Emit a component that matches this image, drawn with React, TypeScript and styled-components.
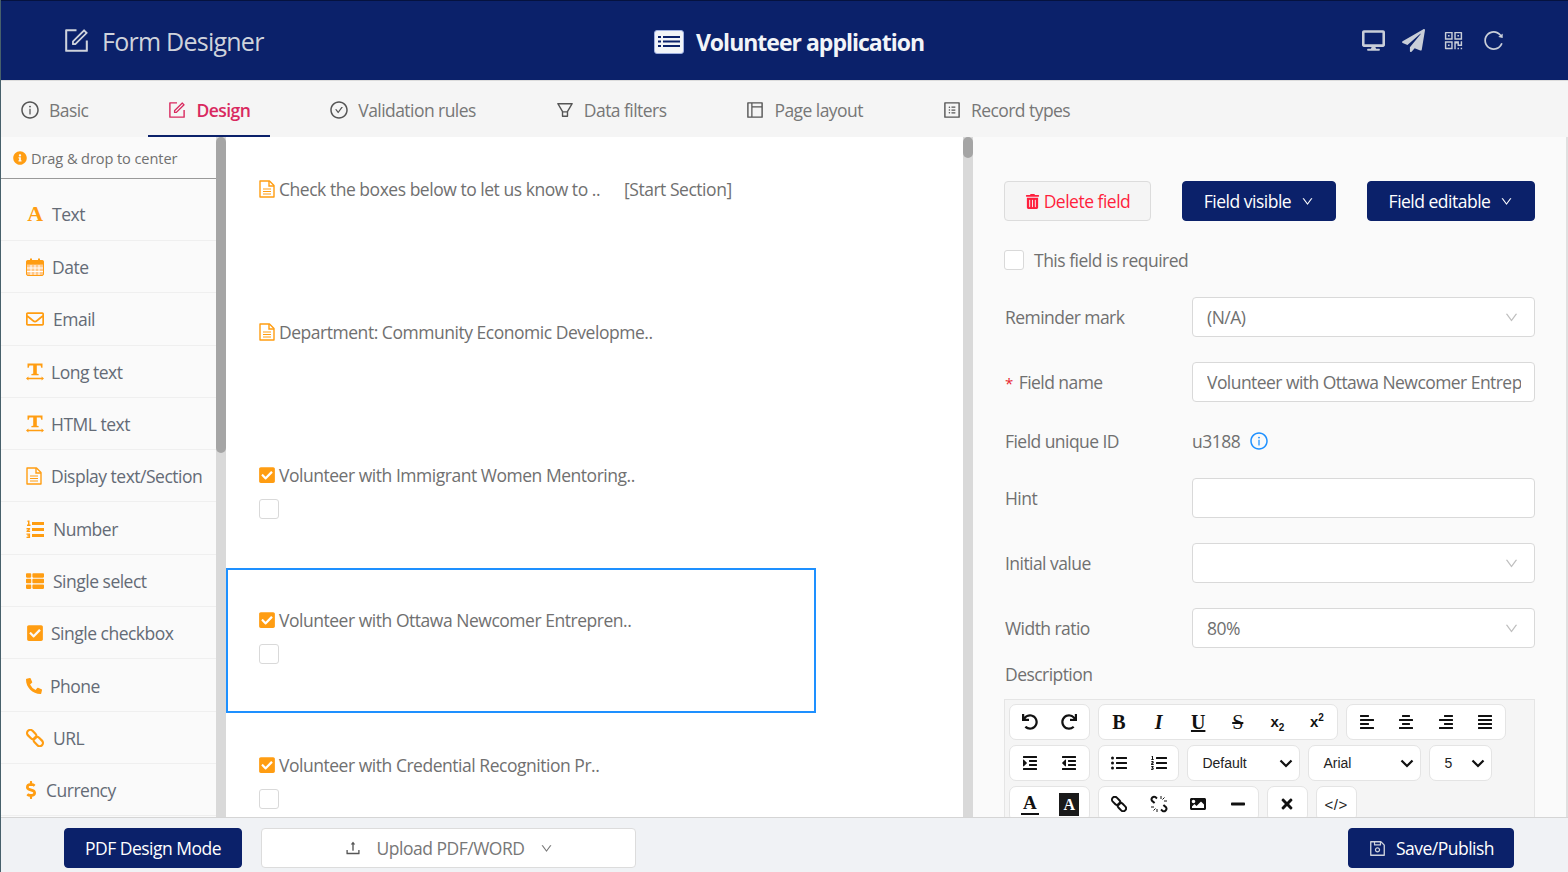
import React from "react";
import styled, { createGlobalStyle } from "styled-components";
import {
  AiOutlineCheckCircle, AiOutlineDown, AiOutlineFilter, AiOutlineForm, AiOutlineInfoCircle, AiOutlineLayout,
  AiOutlineProfile, AiOutlineQrcode, AiOutlineReload, AiOutlineSave, AiOutlineUpload,
} from "react-icons/ai";
import {
  FaAlignCenter, FaAlignJustify, FaAlignLeft, FaAlignRight, FaCheckSquare, FaDesktop, FaDollarSign,
  FaImage, FaIndent, FaInfoCircle, FaListOl, FaListUl, FaMinus, FaOutdent, FaPaperPlane,
  FaPhoneAlt, FaRedo, FaRegEnvelope, FaThList, FaTimes, FaTrashAlt, FaUndo,
} from "react-icons/fa";

const navy = "#0b216a";
const orange = "#ff9d12";
const font = `"Open Sans", "Noto Sans", sans-serif`;
const chevron = `url("data:image/svg+xml,%3Csvg xmlns='http://www.w3.org/2000/svg' width='14' height='9' viewBox='0 0 14 9'%3E%3Cpath d='M1.5 1.5L7 7l5.5-5.5' fill='none' stroke='%23111' stroke-width='2.2'/%3E%3C/svg%3E")`;

const Global = createGlobalStyle`
  html, body { margin: 0; padding: 0; height: 100%; overflow: hidden; background: #fff; }
  body { font-family: ${font}; color: #555; }
  #root { height: 872px; }
  * { box-sizing: border-box; }
`;

const Page = styled.div`
  height: 872px; display: flex; flex-direction: column; overflow: hidden;
  border-left: 1px solid #47606b;
`;
const Header = styled.header`
  flex: 0 0 81px; background: ${navy}; display: grid; grid-template-columns: 1fr auto 1fr; align-items: center;
  border-top: 1px solid #05123f; border-bottom: 1px solid #dcdcdc; padding: 0 63px 0 61px;
`;
const Brand = styled.div`
  display: flex; align-items: center; gap: 11px; color: #cfd3dc; font-size: 25px; letter-spacing: -0.75px; font-weight: 400;
  svg { font-size: 29px; }
`;
const Title = styled.div`
  display: flex; align-items: center; gap: 12px; color: #f2f4f8; font-size: 23px; font-weight: 700; letter-spacing: -1px;
  padding-top: 2px; padding-left: 11px;
`;
const HeadTools = styled.div`
  display: flex; justify-content: flex-end; align-items: center; gap: 17px; color: #c9ced8; font-size: 23px; height: 24px;
`;
const Tabs = styled.nav`
  flex: 0 0 56px; background: #f5f5f5; display: flex; gap: 40px;
`;
const Tab = styled.div<{ $active?: boolean }>`
  display: flex; align-items: center; gap: 9px; padding: 4px 20px 0 19px; height: 56px; font-size: 17.5px; letter-spacing: -0.55px;
  color: ${(p) => (p.$active ? "#d9295f" : "#777")}; font-weight: ${(p) => (p.$active ? 600 : 400)};
  border-bottom: 2px solid ${(p) => (p.$active ? navy : "transparent")};
  svg { font-size: 20px; color: ${(p) => (p.$active ? "#d9295f" : "#555")}; }
`;
const Body = styled.main`
  flex: 1; min-height: 0; display: flex; overflow: hidden;
`;
const Sidebar = styled.aside`
  flex: 0 0 215px; background: #fafafa; overflow: hidden;
`;
const SideHead = styled.div`
  height: 42px; display: flex; align-items: center; gap: 4px; padding-left: 12px; font-size: 14.6px; letter-spacing: -0.1px; color: #707070;
  border-bottom: 1px solid #999; svg { color: ${orange}; font-size: 14px; }
`;
const SideItem = styled.div<{ $gap: number; $first?: boolean }>`
  height: ${(p) => (p.$first ? 62 : 52.3)}px; display: flex; align-items: center; gap: ${(p) => p.$gap}px; padding-left: 25px; color: #646b76;
  font-size: 17.5px; letter-spacing: -0.5px; border-bottom: 1px solid #efefef; padding-top: ${(p) => (p.$first ? 8 : 1)}px;
  svg { color: ${orange}; font-size: 18px; flex: none; }
`;
const FontGlyph = styled.span`
  width: 18px; text-align: center; font: bold 22px/20px "Liberation Serif", serif; color: ${orange}; flex: none;
`;
const Track = styled.div`
  flex: 0 0 10px; background: #d9d9d9;
`;
const Thumb = styled.div<{ $h: number }>`
  height: ${(p) => p.$h}px; background: #a5a5a5; border-radius: 5px;
`;
const Canvas = styled.section`
  flex: 0 0 737px; background: #fff; overflow: hidden;
`;
const Field = styled.div<{ $tall?: boolean; $selected?: boolean }>`
  height: ${(p) => (p.$tall ? 145 : 143)}px; width: ${(p) => (p.$selected ? "590px" : "100%")};
  padding: ${(p) => (p.$selected ? "40px 0 0 31px" : "42px 0 0 33px")};
  border: ${(p) => (p.$selected ? "2px solid #1e90ff" : "none")};
`;
const FieldLine = styled.div`
  display: flex; align-items: center; gap: 4px; height: 20px; white-space: pre; font-size: 17.5px; letter-spacing: -0.47px; color: #707070;
  svg { color: ${orange}; flex: none; }
`;
const CheckIcon = styled(FaCheckSquare)`
  font-size: 18px; margin-left: -1px; margin-right: -1px;
`;
const SectionTag = styled.span`
  margin-left: 20px;
`;
const Box = styled.span`
  display: block; width: 20px; height: 20px; border: 1px solid #d9d9d9; border-radius: 3px; background: #fff; flex: none;
`;
const FieldBox = styled(Box)`
  margin-top: 14px;
`;
const Panel = styled.section`
  flex: 1; background: #fafafa; padding: 44px 31px 0 31px; overflow: hidden; border-right: 2px solid #e0e0e0; min-width: 0;
`;
const ActionRow = styled.div`
  display: flex; justify-content: space-between;
`;
const Btn = styled.div<{ $w: number; $kind?: "primary" | "danger" | "plain" }>`
  width: ${(p) => p.$w}px; height: 40px; border-radius: 4px; display: flex; align-items: center; justify-content: center; flex: none;
  gap: 4px; font-size: 17.5px; letter-spacing: -0.5px; white-space: nowrap;
  background: ${(p) => (p.$kind === "primary" ? navy : p.$kind === "danger" ? "#f5f5f5" : "#fff")};
  color: ${(p) => (p.$kind === "primary" ? "#fff" : p.$kind === "danger" ? "#ff1f3d" : "#777")};
  border: 1px solid ${(p) => (p.$kind === "primary" ? navy : "#dcdcdc")};
`;
const Caret = styled(AiOutlineDown)`
  font-size: 13px; margin-left: 6px;
`;
const RequiredRow = styled.div`
  display: flex; align-items: center; gap: 10px; margin-top: 29px; height: 20px; font-size: 17.5px; letter-spacing: -0.5px; color: #707070;
`;
const Row = styled.div<{ $mt: number; $h?: number }>`
  display: grid; grid-template-columns: 188px 343px; align-items: center; margin-top: ${(p) => p.$mt}px; height: ${(p) => p.$h ?? 40}px;
`;
const Label = styled.div`
  font-size: 17.5px; letter-spacing: -0.55px; color: #707070; padding-left: 1px;
  b { color: #e8242f; font-weight: 400; margin-right: 6px; font-size: 15px; }
`;
const Control = styled.div`
  height: 40px; background: #fff; border: 1px solid #d9d9d9; border-radius: 4px; padding: 0 15px 0 14px; display: flex; align-items: center;
  justify-content: space-between; font-size: 17.5px; letter-spacing: -0.5px; color: #707070; white-space: nowrap; overflow: hidden;
  svg { color: #bfbfbf; font-size: 15px; flex: none; }
`;
const TextInput = styled.input`
  height: 40px; width: 100%; background: #fff; border: 1px solid #d9d9d9; border-radius: 4px; padding: 0 13px 0 14px; outline: none;
  font-family: ${font}; font-size: 17.5px; letter-spacing: -0.55px; color: #707070;
`;
const IdValue = styled.div`
  display: flex; align-items: center; gap: 9px; font-size: 17.5px; letter-spacing: -0.5px; color: #707070;
  svg { color: #1e90ff; font-size: 20px; }
`;
const DescLabel = styled(Label)`
  margin-top: 14px; height: 24px; line-height: 24px;
`;
const Editor = styled.div`
  margin-top: 13px; width: 531px; height: 130px; background: #f5f5f5; border: 1px solid #e5e5e5; padding: 4px 4px;
  display: flex; flex-wrap: wrap; align-content: flex-start; column-gap: 8px; row-gap: 5px;
`;
const ToolGroup = styled.div`
  display: flex; height: 36px; background: #fff; border: 1px solid #e4e4e4; border-radius: 7px;
`;
const Tool = styled.span`
  width: 39.6px; display: flex; align-items: center; justify-content: center; font-size: 16px; color: #111; flex: none;
`;
const ToolGroupOne = styled(ToolGroup)`
  width: 41px; ${Tool} { width: 39px; }
`;
const Glyph = styled.span<{ $italic?: boolean; $line?: "underline" | "line-through" }>`
  font: ${(p) => (p.$italic ? "italic bold" : p.$line === "line-through" ? "normal" : "bold")} 20px/20px "Liberation Serif", serif; color: #111;
  text-decoration: ${(p) => p.$line ?? "none"}; text-decoration-thickness: 1.5px;
`;
const Script = styled.span`
  font: bold 15px/20px "Liberation Sans", sans-serif; color: #111;
  sub, sup { font-size: 10px; line-height: 0; }
`;
const ToolSelect = styled.select<{ $w: number }>`
  width: ${(p) => p.$w}px; height: 36px; border: 1px solid #e4e4e4; border-radius: 7px; padding: 0 6px 0 14px; appearance: none;
  background: #fff ${chevron} no-repeat right 6px center;
  font-family: "Liberation Sans", Arial, sans-serif; font-size: 14px; color: #222; outline: none;
`;
const ColorA = styled.span`
  display: block; width: 18px; text-align: center; font: bold 19px/20px "Liberation Serif", serif; color: #111; border-bottom: 2px solid #111;
`;
const BackA = styled.span`
  display: block; width: 20px; height: 23px; text-align: center; font: bold 16px/23px "Liberation Serif", serif; color: #fff; background: #1a1a1a;
`;
const CodeMark = styled.span`
  font: 15px "Liberation Sans", sans-serif; color: #222; letter-spacing: 0.5px;
`;
const Footer = styled.footer`
  flex: 0 0 55px; background: #f0f2f5; border-top: 1px solid #d5d5d5; display: flex; align-items: flex-start; padding: 10px 54px 0 63px;
`;
const UploadBtn = styled(Btn)`
  margin-left: 19px; gap: 10px;
  svg:first-child { color: #555; font-size: 18px; margin-right: 5px; }
`;
const SaveBtn = styled(Btn)`
  margin-left: auto; gap: 9px; svg { color: #cfd3dc; font-size: 19px; }
`;
const DangerIcon = styled(FaTrashAlt)`
  font-size: 15px;
`;
const DollarIcon = styled(FaDollarSign)`
  && { width: 10px; }
`;
const PhoneIcon = styled(FaPhoneAlt)`
  && { font-size: 16px; }
`;

function TextWidthIcon() {
  return (
    <svg width="18" height="18" viewBox="0 0 18 18" fill="currentColor">
      <path d="M1.5 0.5h15v4.2h-1.3l-.6-2.2H10.8v8.2l1.8.4v1.2H5.4v-1.2l1.8-.4V2.5H3.4l-.6 2.2H1.5z" />
      <path d="M0 15.5l2.4-1.9v1.2h13.2v-1.2l2.4 1.9-2.4 1.9v-1.2H2.4v1.2z" />
    </svg>
  );
}
function CalendarIcon() {
  return (
    <svg width="18" height="18" viewBox="0 0 18 18">
      <rect x="0.5" y="2.5" width="17" height="15" rx="1.5" fill="#ffc88a" stroke={orange} />
      <rect x="0.5" y="2.5" width="17" height="4" fill={orange} />
      <rect x="4" y="0.5" width="2" height="4" fill={orange} />
      <rect x="12" y="0.5" width="2" height="4" fill={orange} />
      <path d="M5 7v10M9 7v10M13 7v10M1 10h16M1 13.5h16" stroke="#fff" strokeWidth="1" />
    </svg>
  );
}
function FileIcon() {
  return (
    <svg width="16" height="18" viewBox="0 0 16 18" fill="none" stroke="currentColor" strokeWidth="1.4">
      <path d="M1 1h9.5L15 5.5V17H1z" strokeLinejoin="round" />
      <path d="M10 1v5h5" />
      <path d="M4 9h8M4 11.5h8M4 14h8" strokeWidth="1.1" />
    </svg>
  );
}
function NumberIcon() {
  return (
    <svg width="18" height="18" viewBox="0 0 18 18" fill="currentColor">
      <rect x="6" y="2" width="12" height="3" />
      <rect x="6" y="8" width="12" height="3" />
      <rect x="6" y="14" width="12" height="3" />
      <path d="M1.5 0.5h2v4h1V6h-3.5V4.5h1V2H1.5zM0.5 8h3.6v1.4L2.3 10.6h1.8V12H0.5v-1.3L2.3 9.4H0.5zM0.5 13.5h3.6V18H0.5v-1.2h2v-.6H1.3v-1h1.2v-.5h-2z" />
    </svg>
  );
}
function ChainIcon({ size = 18 }: { size?: number }) {
  return (
    <svg width={size} height={size} viewBox="0 0 18 18" fill="none" stroke="currentColor" strokeWidth="2.2">
      <rect x="0.5" y="2.3" width="10.5" height="6.4" rx="3.2" transform="rotate(45 5.7 5.5)" />
      <rect x="7" y="9.3" width="10.5" height="6.4" rx="3.2" transform="rotate(45 12.3 12.5)" />
    </svg>
  );
}
function BrokenChainIcon() {
  return (
    <svg width="18" height="18" viewBox="0 0 18 18" fill="none" stroke="currentColor">
      <path d="M7 3.4L5.6 2.2a2.6 2.6 0 0 0-3.6 3.6l2.6 2.3M11 14.6l1.4 1.2a2.6 2.6 0 0 0 3.6-3.6l-2.6-2.3" strokeWidth="2" />
      <path d="M11 1v3M14.5 2.5l-2 2M17 6h-3M1 12h3M3.5 15.5l2-2M7 17v-3" strokeWidth="1" />
    </svg>
  );
}
function FormCardIcon() {
  return (
    <svg width="30" height="24" viewBox="0 0 30 24">
      <rect x="0.5" y="0.5" width="29" height="23" rx="2.5" fill="#f2f4f8" stroke="#9fb0e0" />
      <path d="M9 7h17M9 11.5h17M9 16h17" stroke={navy} strokeWidth="2.2" />
      <path d="M4 7h3M4 11.5h3M4 16h3" stroke={navy} strokeWidth="2.2" />
    </svg>
  );
}

const items: [React.ReactNode, string, number][] = [
  [<FontGlyph key="a">A</FontGlyph>, "Text", 8],
  [<CalendarIcon key="b" />, "Date", 8],
  [<FaRegEnvelope key="c" />, "Email", 9],
  [<TextWidthIcon key="d" />, "Long text", 7],
  [<TextWidthIcon key="e" />, "HTML text", 7],
  [<FileIcon key="f" />, "Display text/Section", 9],
  [<NumberIcon key="g" />, "Number", 9],
  [<FaThList key="h" />, "Single select", 9],
  [<FaCheckSquare key="i" />, "Single checkbox", 7],
  [<PhoneIcon key="j" />, "Phone", 8],
  [<ChainIcon key="k" />, "URL", 9],
  [<DollarIcon key="l" />, "Currency", 10],
];

const tabs: [React.ReactNode, string][] = [
  [<AiOutlineInfoCircle key="a" />, "Basic"],
  [<AiOutlineForm key="b" />, "Design"],
  [<AiOutlineCheckCircle key="c" />, "Validation rules"],
  [<AiOutlineFilter key="d" />, "Data filters"],
  [<AiOutlineLayout key="e" />, "Page layout"],
  [<AiOutlineProfile key="f" />, "Record types"],
];

export default function App() {
  return (
    <Page>
      <Global />
      <Header>
        <Brand><AiOutlineForm /><span>Form Designer</span></Brand>
        <Title><FormCardIcon /><span>Volunteer application</span></Title>
        <HeadTools><FaDesktop /><FaPaperPlane /><AiOutlineQrcode /><AiOutlineReload /></HeadTools>
      </Header>
      <Tabs>
        {tabs.map(([icon, name]) => (
          <Tab key={name} $active={name === "Design"}>{icon}<span>{name}</span></Tab>
        ))}
      </Tabs>
      <Body>
        <Sidebar>
          <SideHead><FaInfoCircle /><span>Drag &amp; drop to center</span></SideHead>
          {items.map(([icon, name, gap], i) => (
            <SideItem key={name} $gap={gap} $first={i === 0}>{icon}<span>{name}</span></SideItem>
          ))}
        </Sidebar>
        <Track><Thumb $h={316} /></Track>
        <Canvas>
          <Field>
            <FieldLine><FileIcon /><span>Check the boxes below to let us know to ..</span><SectionTag>[Start Section]</SectionTag></FieldLine>
          </Field>
          <Field>
            <FieldLine><FileIcon /><span>Department: Community Economic Developme..</span></FieldLine>
          </Field>
          <Field $tall>
            <FieldLine><CheckIcon /><span>Volunteer with Immigrant Women Mentoring..</span></FieldLine>
            <FieldBox />
          </Field>
          <Field $tall $selected>
            <FieldLine><CheckIcon /><span>Volunteer with Ottawa Newcomer Entrepren..</span></FieldLine>
            <FieldBox />
          </Field>
          <Field $tall>
            <FieldLine><CheckIcon /><span>Volunteer with Credential Recognition Pr..</span></FieldLine>
            <FieldBox />
          </Field>
        </Canvas>
        <Track><Thumb $h={21} /></Track>
        <Panel>
          <ActionRow>
            <Btn $w={147} $kind="danger"><DangerIcon /><span>Delete field</span></Btn>
            <Btn $w={154} $kind="primary">Field visible<Caret /></Btn>
            <Btn $w={168} $kind="primary">Field editable<Caret /></Btn>
          </ActionRow>
          <RequiredRow><Box /><span>This field is required</span></RequiredRow>
          <Row $mt={27}><Label>Reminder mark</Label><Control>(N/A)<AiOutlineDown /></Control></Row>
          <Row $mt={25}><Label><b>*</b>Field name</Label><TextInput readOnly value="Volunteer with Ottawa Newcomer Entrepreneurship" /></Row>
          <Row $mt={26} $h={26}><Label>Field unique ID</Label><IdValue>u3188<AiOutlineInfoCircle /></IdValue></Row>
          <Row $mt={24}><Label>Hint</Label><TextInput readOnly value="" /></Row>
          <Row $mt={25}><Label>Initial value</Label><Control><span /><AiOutlineDown /></Control></Row>
          <Row $mt={25}><Label>Width ratio</Label><Control>80%<AiOutlineDown /></Control></Row>
          <DescLabel>Description</DescLabel>
          <Editor>
            <ToolGroup><Tool><FaUndo /></Tool><Tool><FaRedo /></Tool></ToolGroup>
            <ToolGroup>
              <Tool><Glyph>B</Glyph></Tool>
              <Tool><Glyph $italic>I</Glyph></Tool>
              <Tool><Glyph $line="underline">U</Glyph></Tool>
              <Tool><Glyph $line="line-through">S</Glyph></Tool>
              <Tool><Script>x<sub>2</sub></Script></Tool>
              <Tool><Script>x<sup>2</sup></Script></Tool>
            </ToolGroup>
            <ToolGroup>
              <Tool><FaAlignLeft /></Tool><Tool><FaAlignCenter /></Tool><Tool><FaAlignRight /></Tool><Tool><FaAlignJustify /></Tool>
            </ToolGroup>
            <ToolGroup><Tool><FaIndent /></Tool><Tool><FaOutdent /></Tool></ToolGroup>
            <ToolGroup><Tool><FaListUl /></Tool><Tool><FaListOl /></Tool></ToolGroup>
            <ToolSelect $w={113} defaultValue="Default"><option>Default</option></ToolSelect>
            <ToolSelect $w={113} defaultValue="Arial"><option>Arial</option></ToolSelect>
            <ToolSelect $w={63} defaultValue="5"><option>5</option></ToolSelect>
            <ToolGroup><Tool><ColorA>A</ColorA></Tool><Tool><BackA>A</BackA></Tool></ToolGroup>
            <ToolGroup><Tool><ChainIcon size={16} /></Tool><Tool><BrokenChainIcon /></Tool><Tool><FaImage /></Tool><Tool><FaMinus /></Tool></ToolGroup>
            <ToolGroupOne><Tool><FaTimes /></Tool></ToolGroupOne>
            <ToolGroupOne><Tool><CodeMark>&lt;/&gt;</CodeMark></Tool></ToolGroupOne>
          </Editor>
        </Panel>
      </Body>
      <Footer>
        <Btn $w={178} $kind="primary">PDF Design Mode</Btn>
        <UploadBtn $w={375}><AiOutlineUpload /><span>Upload PDF/WORD</span><Caret /></UploadBtn>
        <SaveBtn $w={166} $kind="primary"><AiOutlineSave /><span>Save/Publish</span></SaveBtn>
      </Footer>
    </Page>
  );
}
